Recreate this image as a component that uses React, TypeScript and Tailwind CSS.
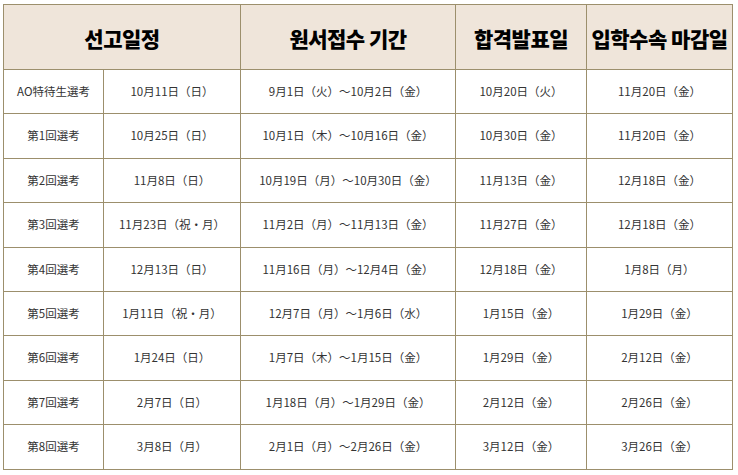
import React from "react";

const rows: string[][] = [
  ["AO特待生選考", "10月11日（日）", "9月1日（火）～10月2日（金）", "10月20日（火）", "11月20日（金）"],
  ["第1回選考", "10月25日（日）", "10月1日（木）～10月16日（金）", "10月30日（金）", "11月20日（金）"],
  ["第2回選考", "11月8日（日）", "10月19日（月）～10月30日（金）", "11月13日（金）", "12月18日（金）"],
  ["第3回選考", "11月23日（祝・月）", "11月2日（月）～11月13日（金）", "11月27日（金）", "12月18日（金）"],
  ["第4回選考", "12月13日（日）", "11月16日（月）～12月4日（金）", "12月18日（金）", "1月8日（月）"],
  ["第5回選考", "1月11日（祝・月）", "12月7日（月）～1月6日（水）", "1月15日（金）", "1月29日（金）"],
  ["第6回選考", "1月24日（日）", "1月7日（木）～1月15日（金）", "1月29日（金）", "2月12日（金）"],
  ["第7回選考", "2月7日（日）", "1月18日（月）～1月29日（金）", "2月12日（金）", "2月26日（金）"],
  ["第8回選考", "3月8日（月）", "2月1日（月）～2月26日（金）", "3月12日（金）", "3月26日（金）"],
];

export default function App() {
  const th =
    "border border-[#9c8f6c] bg-[#efe5da] text-center align-middle font-black text-[21px] tracking-[-0.5px] text-black whitespace-nowrap p-0 pt-[4px]";
  const td =
    "border border-[#9c8f6c] bg-white text-center align-middle text-[11.5px] text-[#333] whitespace-nowrap p-0";
  const kr = { fontFamily: '"Noto Sans CJK KR", sans-serif' };
  return (
    <div className="w-[738px] h-[475px] bg-white pl-[3px] pt-[4px]">
      <table
        className="table-fixed border-collapse w-[729px]"
        style={{ fontFamily: '"Noto Sans CJK JP", "Noto Sans CJK KR", sans-serif' }}
      >
        <colgroup>
          <col className="w-[100px]" />
          <col className="w-[137px]" />
          <col className="w-[215px]" />
          <col className="w-[131px]" />
          <col className="w-[146px]" />
        </colgroup>
        <thead>
          <tr className="h-[65px]">
            <th colSpan={2} className={th} style={kr}>
              선고일정
            </th>
            <th className={th} style={kr}>
              원서접수 기간
            </th>
            <th className={th} style={kr}>
              합격발표일
            </th>
            <th className={th} style={kr}>
              입학수속 마감일
            </th>
          </tr>
        </thead>
        <tbody>
          {rows.map((r, i) => (
            <tr key={i} className="h-[44.4px]">
              {r.map((c, j) => (
                <td key={j} className={td}>
                  {c}
                </td>
              ))}
            </tr>
          ))}
        </tbody>
      </table>
    </div>
  );
}
